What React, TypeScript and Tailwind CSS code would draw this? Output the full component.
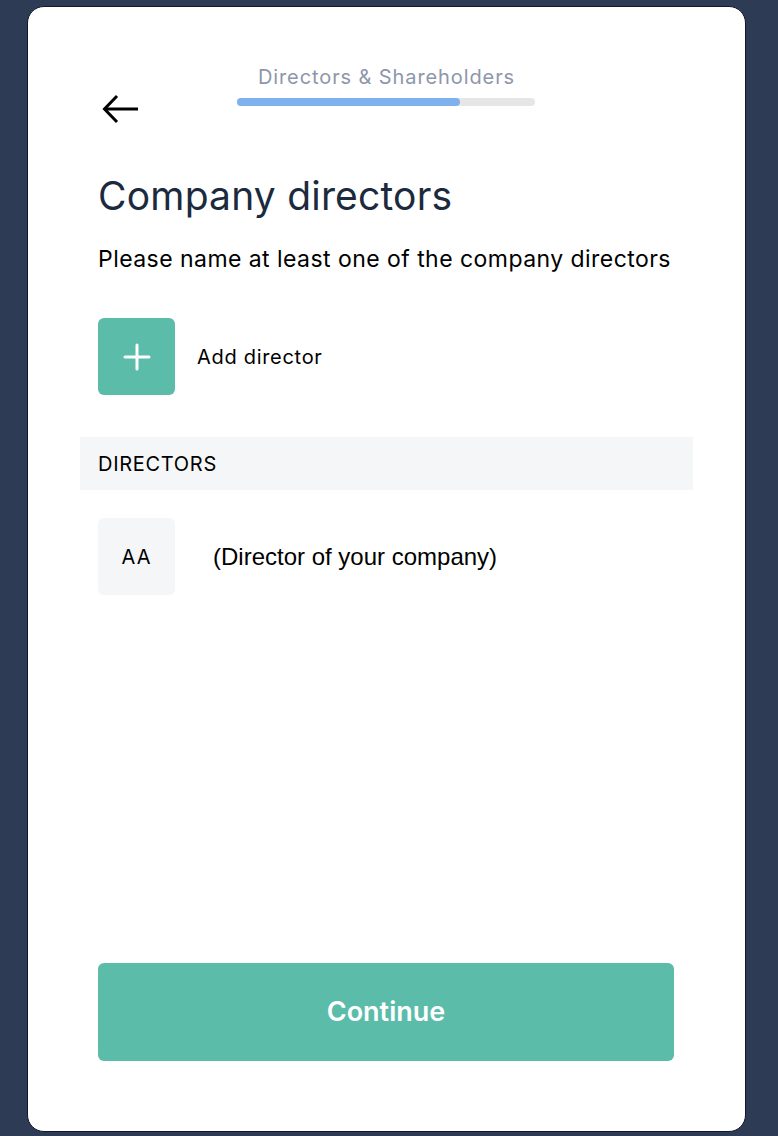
import React from "react";

const ProgressHeader = ({ title, percent }: { title: string; percent: number }) => (
	<div className="relative h-[122px]">
		<button className="absolute left-[4px] top-[87px] text-black" aria-label="Back">
			<svg width="38" height="30" viewBox="0 0 38 30" fill="none" stroke="currentColor" strokeWidth="3">
				<path d="M36 15H3" />
				<path d="M15 2L2.5 15L15 28" />
			</svg>
		</button>
		<div className="flex flex-col items-center pt-[56px]">
			<span className="text-[20px] leading-[28px] tracking-[0.9px] text-[#8e96ab]">{title}</span>
			<div className="mt-[7px] ml-[-2px] h-[8px] w-[298px] rounded-full bg-[#e6e6e6]">
				<div className="h-full rounded-full bg-[#80b1ef]" style={{ width: `${percent}%` }} />
			</div>
		</div>
	</div>
);

export default function App() {
	return (
		<div className="min-h-[1136px] bg-[#2d3b55] pt-[6px] pl-[27px]" style={{ fontFamily: "Inter, Roboto, sans-serif" }}>
			<div className="w-[719px] h-[1126px] rounded-[17px] bg-white border border-[#111827] flex flex-col px-[70px]">
				<ProgressHeader title="Directors & Shareholders" percent={75} />

				<h1 className="mt-[43px] text-[39px] leading-[48px] tracking-[0.2px] text-[#1c2a3d]">Company directors</h1>
				<p className="mt-[24px] text-[23px] leading-[30px] tracking-[0.45px] text-black">
					Please name at least one of the company directors
				</p>

				<button className="mt-[44px] flex items-center gap-[22px] text-left">
					<span className="flex h-[77px] w-[77px] items-center justify-center rounded-[6px] bg-[#5bbcaa]">
						<svg width="30" height="30" viewBox="0 0 30 30" stroke="white" strokeWidth="3" strokeLinecap="round">
							<path d="M15 3v24M3 15h24" />
						</svg>
					</span>
					<span className="text-[20px] tracking-[0.7px] text-black">Add director</span>
				</button>

				<div className="mt-[42px] mx-[-18px] h-[53px] bg-[#f5f6f8] flex items-center px-[18px]">
					<span className="text-[20px] tracking-[0.7px] text-black">DIRECTORS</span>
				</div>

				<div className="mt-[28px] flex items-center">
					<span className="flex h-[77px] w-[77px] items-center justify-center rounded-[6px] bg-[#f5f6f8] text-[20px] tracking-[1px] text-black">
						AA
					</span>
					<span
						className="ml-[38px] text-[24px] text-black"
						style={{ fontFamily: "'Liberation Sans', Arial, sans-serif" }}
					>
						(Director of your company)
					</span>
				</div>

				<div className="flex-1" />

				<button className="mb-[70px] h-[98px] w-[576px] rounded-[6px] bg-[#5bbcaa] text-[27px] font-semibold text-white">
					Continue
				</button>
			</div>
		</div>
	);
}
